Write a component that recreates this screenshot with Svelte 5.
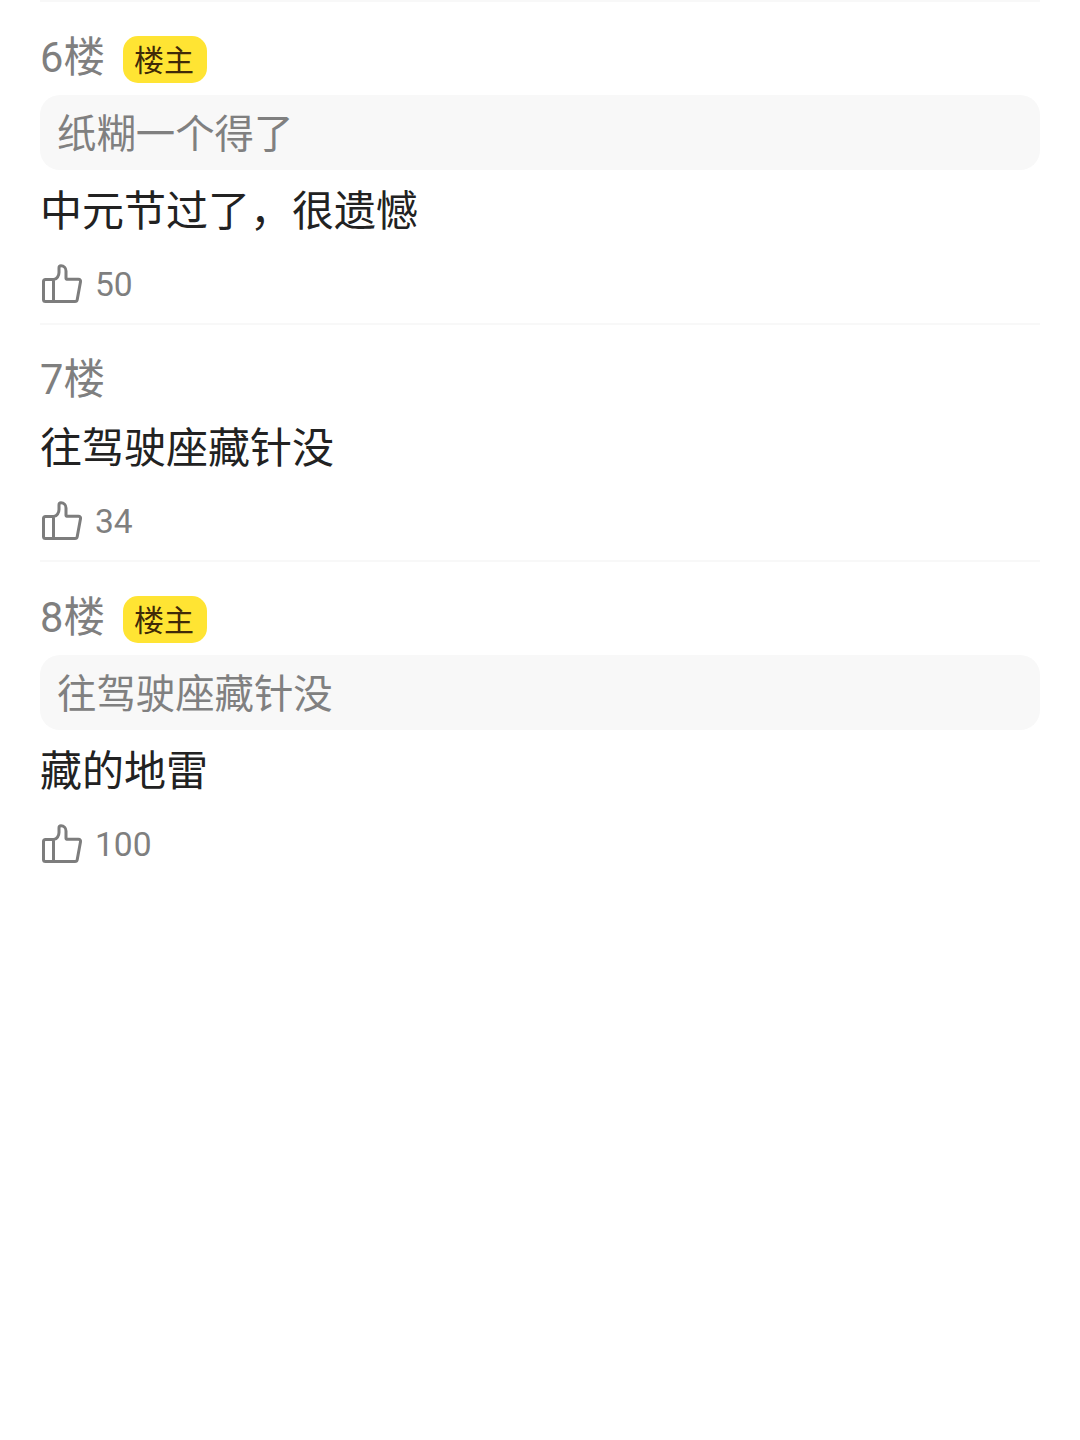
<script>
  const posts = [
    { floor: '6楼', op: true, quote: '纸糊一个得了', body: '中元节过了，很遗憾', likes: 50 },
    { floor: '7楼', op: false, quote: '', body: '往驾驶座藏针没', likes: 34 },
    { floor: '8楼', op: true, quote: '往驾驶座藏针没', body: '藏的地雷', likes: 100 }
  ];
</script>

<div class="page">
  {#each posts as p, i}
    <section class="post" class:first={i === 0} class:plain={!p.op}>
      <div class="head">
        <span class="floor">{p.floor}</span>
        {#if p.op}<span class="badge">楼主</span>{/if}
      </div>
      {#if p.quote}<div class="quote">{p.quote}</div>{/if}
      <div class="body">{p.body}</div>
      <div class="like">
        <svg class="thumb" width="42" height="40" viewBox="0 0 42 40" fill="none" stroke="#7d7d7d" stroke-width="3" stroke-linejoin="round" stroke-linecap="round">
          <path d="M12.5 15.5H4.5C3.2 15.5 2.5 16.3 2.5 17.5V35.5C2.5 36.7 3.2 37.5 4.5 37.5H34C35.2 37.5 36 36.8 36.2 35.7L39.5 17.8C39.8 16.3 38.9 15.2 37.4 15.2H25.5C25.2 15.2 25 15 25 14.6V7C25 3.8 22.8 1.8 20 1.8C18.8 1.8 18 2.6 18 3.8V8.5C18 11.5 16 15.5 12.5 15.5V37.5" />
        </svg>
        <span class="count">{p.likes}</span>
      </div>
    </section>
  {/each}
</div>

<style>
  :global(body) {
    margin: 0;
    background: #fff;
  }
  .page {
    width: 1080px;
    height: 1440px;
    box-sizing: border-box;
    padding: 0 40px;
    background: #fff;
    font-family: "Noto Sans CJK SC", "Noto Sans", sans-serif;
    overflow: hidden;
  }
  .post {
    border-top: 2px solid #f8f8f8;
    box-sizing: border-box;
  }
  .post.first {
    height: 323px;
    padding-top: 30px;
  }
  .post:nth-child(2) {
    height: 237px;
    padding-top: 29px;
  }
  .post:nth-child(3) {
    height: 320px;
    padding-top: 30px;
  }
  .head {
    display: flex;
    align-items: center;
    height: 52px;
  }
  .floor {
    font-size: 41.6px;
    line-height: 54px;
    color: #7f7f7f;
    font-family: Roboto, "Noto Sans CJK SC", sans-serif;
  }
  .badge {
    margin-left: 18px;
    margin-top: 2px;
    box-sizing: border-box;
    width: 84px;
    height: 47px;
    padding-right: 2px;
    border-radius: 15px;
    background: #ffe433;
    color: #3f2a08;
    font-size: 30px;
    line-height: 45px;
    text-align: center;
  }
  .quote {
    margin-top: 11px;
    height: 75px;
    border-radius: 20px;
    background: #f8f8f8;
    padding-left: 17px;
    color: #808080;
    font-size: 39.4px;
    line-height: 71px;
  }
  .body {
    margin-top: 9px;
    font-size: 42px;
    line-height: 58px;
    color: #222;
  }
  .plain .body {
    margin-top: 10px;
  }
  .like {
    margin-top: 26px;
    display: flex;
    align-items: center;
    height: 42px;
  }
  .thumb {
    margin-left: 1px;
  }
  .count {
    margin-left: 12px;
    font-family: Roboto, sans-serif;
    font-size: 33.6px;
    color: #7f7f7f;
  }
</style>
